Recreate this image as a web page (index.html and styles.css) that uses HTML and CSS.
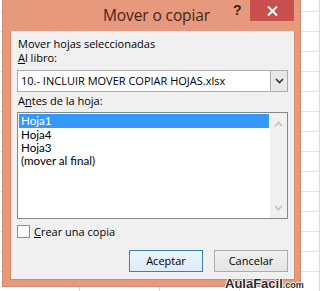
FILE: index.html
```html
<!DOCTYPE html>
<html lang="es">
<head>
<meta charset="utf-8">
<title>Mover o copiar</title>
<link rel="stylesheet" href="styles.css">
</head>
<body>
<div class="sheet">
  <div class="dialog">
    <div class="titlebar">
      <div class="title">Mover o copiar</div>
      <div class="help">?</div>
      <div class="close">
        <svg width="11" height="10" viewBox="0 0 11 10"><path d="M1 0.5 L10 9.5 M10 0.5 L1 9.5" stroke="#fff" stroke-width="2"/></svg>
      </div>
    </div>
    <div class="panel">
      <div class="label first">Mover hojas seleccionadas</div>
      <div class="label"><u>A</u>l libro:</div>
      <div class="combo">
        <div class="combo-text">10.- INCLUIR MOVER COPIAR HOJAS.xlsx</div>
        <div class="combo-btn">
          <svg width="9" height="6" viewBox="0 0 9 6"><path d="M1 1 L4.5 4.5 L8 1" fill="none" stroke="#333" stroke-width="1.6"/></svg>
        </div>
      </div>
      <div class="label second">A<u>n</u>tes de la hoja:</div>
      <div class="list">
        <div class="items">
          <div class="item selected">Hoja1</div>
          <div class="item">Hoja4</div>
          <div class="item">Hoja3</div>
          <div class="item">(mover al final)</div>
        </div>
        <div class="scroll">
          <svg width="9" height="6" viewBox="0 0 9 6"><path d="M1 5 L4.5 1.5 L8 5" fill="none" stroke="#c2c2c2" stroke-width="1.6"/></svg>
          <svg width="9" height="6" viewBox="0 0 9 6"><path d="M1 1 L4.5 4.5 L8 1" fill="none" stroke="#c2c2c2" stroke-width="1.6"/></svg>
        </div>
      </div>
      <div class="check-row">
        <span class="checkbox"></span>
        <span class="check-label"><u>C</u>rear una copia</span>
      </div>
      <div class="buttons">
        <div class="btn default">Aceptar</div>
        <div class="btn">Cancelar</div>
      </div>
    </div>
  </div>
  <div class="logo">AulaFacil<span class="dotcom">.com</span></div>
</div>
</body>
</html>
```
FILE: styles.css
```css
html, body {
  margin: 0;
  padding: 0;
}
body {
  width: 305px;
  height: 291px;
  overflow: hidden;
  background-color: #fff;
  background-image:
    linear-gradient(to right, transparent 79px, #dcdcdc 79px, #dcdcdc 80px, transparent 80px),
    linear-gradient(to bottom, transparent 11px, #e2e2e2 11px, #e2e2e2 12px, transparent 12px);
  background-size: 80px 291px, 305px 20px;
  font-family: "Open Sans", "Noto Sans", sans-serif;
  font-size: 11px;
  color: #000;
}
.sheet {
  position: relative;
  width: 305px;
  height: 291px;
}
.dialog {
  margin-left: 2px;
  width: 299px;
  height: 287px;
  box-sizing: border-box;
  background: #e6997c;
  border: 1px solid #d48a6e;
  border-top: none;
  display: flex;
  flex-direction: column;
}
.titlebar {
  height: 31px;
  flex: none;
  position: relative;
}
.title {
  position: absolute;
  left: 0;
  right: 0;
  top: 4px;
  text-align: center;
  font-family: "Open Sans", sans-serif;
  font-size: 15.5px;
  color: #4a2418;
  letter-spacing: -0.1px;
  padding-left: 10px;
}
.help {
  position: absolute;
  left: 230px;
  top: 2px;
  font-family: "Liberation Sans", sans-serif;
  font-weight: bold;
  font-size: 14px;
  color: #3a2218;
}
.close {
  position: absolute;
  left: 247px;
  top: 0;
  width: 44px;
  height: 21px;
  background: #c8504c;
  display: flex;
  align-items: center;
  justify-content: center;
}
.panel {
  margin: 0 5px 6px 7px;
  flex: 1;
  background: #f0f0f0;
  border: 1px solid #d7876b;
  border-top: none;
  box-sizing: border-box;
  padding: 0 6px 0 6px;
  display: flex;
  flex-direction: column;
}
.label {
  height: 14px;
  line-height: 14px;
  margin-left: 1px;
  white-space: nowrap;
}
.label.first {
  margin-top: 6px;
}
.label u, .check-label u {
  text-decoration-thickness: 1px;
  text-underline-offset: 1px;
}
.combo {
  margin-top: 5px;
  height: 22px;
  flex: none;
  box-sizing: border-box;
  border: 1px solid #abadb3;
  background: #fff;
  display: flex;
  align-items: stretch;
}
.combo-text {
  flex: 1;
  padding-left: 3px;
  line-height: 20px;
  white-space: nowrap;
  overflow: hidden;
}
.combo-btn {
  width: 16px;
  border-left: 1px solid #acacac;
  background: #e8e8e8;
  display: flex;
  align-items: center;
  justify-content: center;
}
.label.second {
  margin-top: 2px;
}
.list {
  margin-top: 4px;
  height: 107px;
  flex: none;
  box-sizing: border-box;
  border: 1px solid #828790;
  background: #fff;
  display: flex;
}
.items {
  flex: 1;
  padding: 1px 1px 0 1px;
}
.item {
  height: 13px;
  line-height: 13px;
  padding-left: 2px;
  white-space: nowrap;
  font-family: Lato, "Open Sans", sans-serif;
  font-size: 11.6px;
}
.item.selected {
  background: #3399ff;
  color: #fff;
  height: 14px;
  line-height: 14px;
}
.scroll {
  width: 17px;
  background: #f0f0f0;
  display: flex;
  flex-direction: column;
  justify-content: space-between;
  align-items: center;
  padding: 8px 0 7px;
  box-sizing: border-box;
}
.check-row {
  margin-top: 6px;
  height: 13px;
  flex: none;
  display: flex;
  align-items: center;
  gap: 4px;
}
.checkbox {
  width: 13px;
  height: 13px;
  box-sizing: border-box;
  border: 1px solid #8f8f8f;
  background: #fff;
}
.check-label {
  line-height: 13px;
}
.buttons {
  margin-top: 12px;
  display: flex;
  justify-content: flex-end;
  gap: 11px;
}
.btn {
  width: 74px;
  height: 22px;
  box-sizing: border-box;
  border: 1px solid #acacac;
  background: linear-gradient(#f0f0f0, #e5e5e5);
  text-align: center;
  line-height: 20px;
}
.btn.default {
  border-color: #3c7fb1;
  background: linear-gradient(#ecf4fc, #dcecfc);
}
.logo {
  position: absolute;
  left: 225px;
  top: 276px;
  font-family: "Liberation Sans", sans-serif;
  font-weight: bold;
  font-size: 13px;
  color: #2a2a2a;
  text-shadow: 1px 0 0 #fff, -1px 0 0 #fff, 0 1px 0 #fff, 0 -1px 0 #fff;
}
.dotcom {
  font-size: 9px;
}
```
